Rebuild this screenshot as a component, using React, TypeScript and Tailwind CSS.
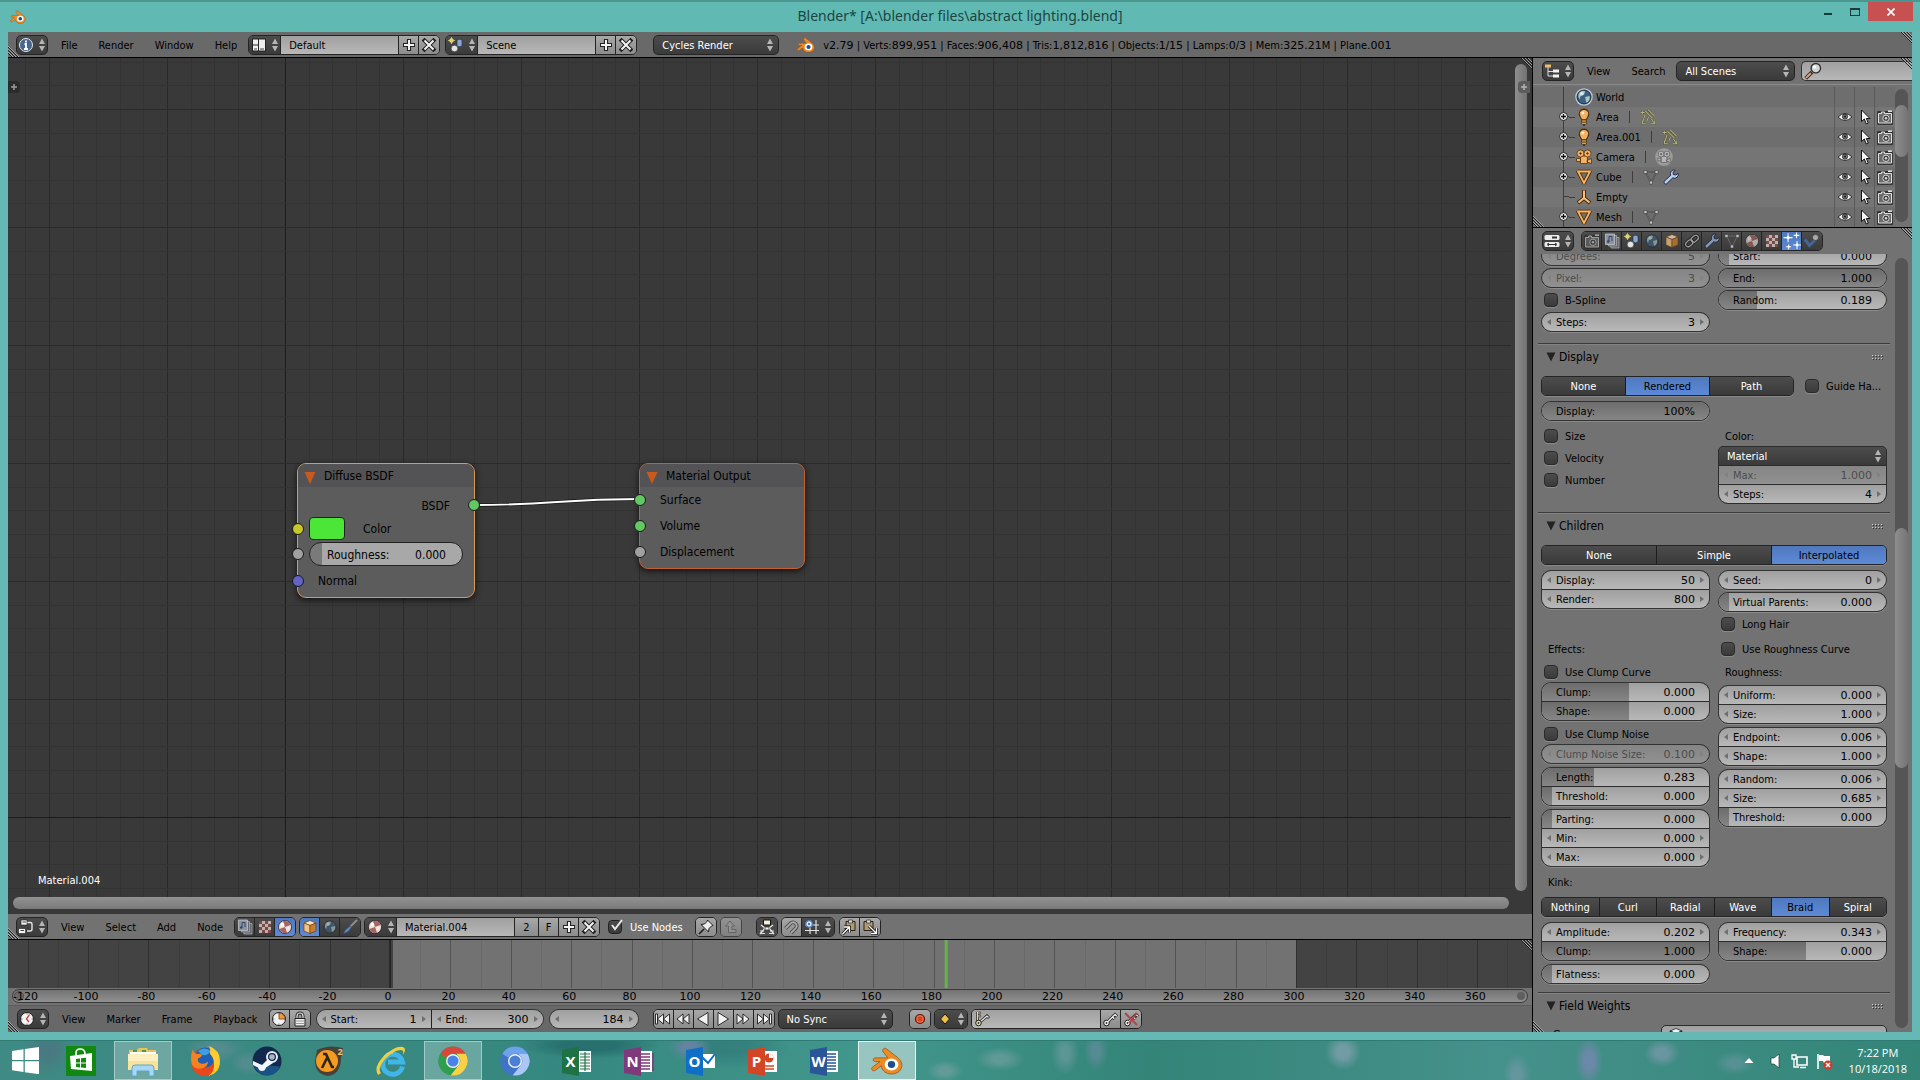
import type { ReactNode } from 'react'

/* ---------- small shared pieces ---------- */

const valueFont = "font-['DejaVu_Sans',sans-serif]"

// Diagonal drag handle in the corner of an editor
const Grip = ({ at }: { at: 'tr' | 'bl' }) => (
    <svg
        className={`pointer-events-none absolute z-10 size-3 ${at === 'tr' ? 'top-0 right-0' : 'bottom-0 left-0'}`}
        viewBox="0 0 12 12"
        aria-hidden="true"
    >
        {at === 'tr' ? (
            <>
                <path d="M1 0 12 11M4 0 12 8M7 0 12 5" stroke="#1f1f1f" />
                <path d="M2 0 12 10M5 0 12 7M8 0 12 4" stroke="#b9b9b9" strokeWidth="0.8" />
            </>
        ) : (
            <>
                <path d="M0 2 10 12M0 5 7 12M0 8 4 12" stroke="#1f1f1f" />
                <path d="M0 1 11 12M0 4 8 12M0 7 5 12" stroke="#b9b9b9" strokeWidth="0.8" />
            </>
        )}
    </svg>
)

const UpDown = () => (
    <svg className="pointer-events-none h-3.5 w-2 shrink-0" viewBox="0 0 8 14" aria-hidden="true">
        <path d="M4 0.500 7 6H1zM4 13.500 1 8h6z" fill="#b5b5b5" />
    </svg>
)

const Tri = ({ dir }: { dir: 'l' | 'r' }) => (
    <svg className="h-2 w-1.5 shrink-0" viewBox="0 0 6 8" aria-hidden="true">
        <path d={dir === 'l' ? 'M5 1v6L1 4z' : 'M1 1v6l4-3z'} fill="#6f6f6f" />
    </svg>
)

const dark = 'bg-linear-to-b from-[#4c4c4c] to-[#3a3a3a]'
const light = 'bg-linear-to-b from-[#a0a0a0] to-[#b8b8b8]'
const tool = 'bg-linear-to-b from-[#a8a8a8] to-[#8c8c8c]'
const blue = 'bg-linear-to-b from-[#4f78bd] to-[#5d8ad8]'

const Cluster = ({ children, className = '' }: { children: ReactNode; className?: string }) => (
    <div className={`flex h-5 shrink-0 overflow-hidden rounded-[5px] border border-[#242424] divide-x divide-[#242424] ${className}`}>
        {children}
    </div>
)

const IconBtn = ({ label, tone = tool, wide, children }: { label: string; tone?: string; wide?: boolean; children: ReactNode }) => (
    <button aria-label={label} className={`flex h-full items-center justify-center gap-1 ${wide ? 'w-8' : 'w-5'} ${tone}`}>
        {children}
    </button>
)

const EditorType = ({ label, children }: { label: string; children: ReactNode }) => (
    <button aria-label={label} className={`flex h-5 w-8 shrink-0 items-center justify-center gap-1 rounded-[5px] border border-[#242424] ${dark}`}>
        {children}
        <UpDown />
    </button>
)

const Menus = ({ items }: { items: string[] }) => (
    <nav className="flex h-5 items-center gap-[21px] pt-0.5 pr-[11px] pl-[13px]">
        {items.map((m) => (
            <button key={m} className="text-black">{m}</button>
        ))}
    </nav>
)

const Header = ({ children, className = '' }: { children: ReactNode; className?: string }) => (
    <div className={`relative flex h-[26px] shrink-0 items-start pt-[3px] ${className}`}>{children}</div>
)

const Drop = ({ label, value, className = '' }: { label: string; value: string; className?: string }) => (
    <div className={`relative flex items-center ${dark} ${className}`}>
        <select aria-label={label} className="h-full w-full appearance-none bg-transparent pt-0.5 pl-2 text-white outline-none">
            <option>{value}</option>
        </select>
        <span className="pointer-events-none absolute right-1 flex"><UpDown /></span>
    </div>
)

/* ---------- icons ---------- */

const I = ({ children, className = 'size-4' }: { children: ReactNode; className?: string }) => (
    <svg className={`shrink-0 ${className}`} viewBox="0 0 16 16" fill="none" aria-hidden="true">{children}</svg>
)

const PlusIcon = () => (
    <I><path d="M8 2v12M2 8h12" stroke="#222" strokeWidth="4.200" /><path d="M8 3v10M3 8h10" stroke="#f4f4f4" strokeWidth="2" /></I>
)
const CrossIcon = () => (
    <I><path d="M3.500 3.500l9 9M12.500 3.500l-9 9" stroke="#222" strokeWidth="4" strokeLinecap="square" /><path d="M3.500 3.500l9 9M12.500 3.500l-9 9" stroke="#f4f4f4" strokeWidth="2" /></I>
)
const InfoIcon = () => (
    <I>
        <circle cx="8" cy="8" r="6.500" fill="#46658f" stroke="#dfe6ee" />
        <path d="M8 3.500v2M6.500 7H8v5M6 12h4" stroke="#fff" strokeWidth="1.800" />
    </I>
)
const ScreenIcon = () => (
    <I>
        <path d="M1 1.500h14v13H1z" fill="#222" />
        <path d="M2 2.500h5v5H2zM2 8.500h5v5H2zM8 2.500h6v11H8z" fill="#efefef" />
        <path d="M3 12h3M9 12h4" stroke="#444" />
    </I>
)
const SceneIcon = () => (
    <I>
        <circle cx="3.500" cy="3.500" r="2.200" fill="#e8dc6a" />
        <path d="M3.500 0v7M0 3.500h7" stroke="#d9cf7d" strokeWidth="0.800" />
        <path d="M9 3q2.500-1.500 5 0v6q-2.500 1.500-5 0z" fill="#89a7d6" stroke="#1e2c45" strokeWidth="0.600" />
        <circle cx="6.500" cy="11.500" r="3.300" fill="#e4e4e4" stroke="#333" strokeWidth="0.600" />
    </I>
)
const TreeIcon = () => (
    <I>
        <path d="M4 3v10h5M4 8.500h5" stroke="#dedede" />
        <path d="M1 1.500h6v3H1z" fill="#f0b869" /><path d="M9 6.500h6v3H9zM9 11.500h6v3H9z" fill="#f2f2f2" />
    </I>
)
const PropsIcon = () => (
    <I>
        <rect x="0.500" y="2" width="15" height="5" rx="1.500" fill="#ececec" /><path d="M8 4.500h5" stroke="#333" strokeWidth="2" />
        <rect x="0.500" y="9" width="15" height="5" rx="1.500" fill="#ececec" /><path d="M4 11.500h8M5 10l-2 1.500L5 13M11 10l2 1.500-2 1.500" stroke="#333" />
    </I>
)
const NodeIcon = () => (
    <I>
        <path d="M9 3.500h3.500q1.500 0 1.500 1.500v5q0 2-2 2H9" stroke="#e5e5e5" strokeWidth="1.400" />
        <path d="M3 1h6v5H3zM0.500 9.500h7v5h-7z" fill="#f3f3f3" stroke="#1c1c1c" strokeWidth="0.600" />
        <path d="M4.500 3H8M2.500 11.500H6" stroke="#444" />
    </I>
)
const ClockIcon = ({ tone = '#c33' }: { tone?: string }) => (
    <I>
        <circle cx="8" cy="8" r="6.500" fill="#f3f3f3" stroke="#222" />
        {tone === 'pie' ? <path d="M8 8V2a6 6 0 0 1 6 6z" fill="#ef9a3b" stroke="#7a3d00" strokeWidth="0.800" /> : <path d="M10.500 3.500 7.500 8l2.500 3" stroke={tone} strokeWidth="1.300" />}
        <path d="M8 2v1.500M8 12.500V14M2 8h1.500M12.500 8H14" stroke="#777" />
    </I>
)
const Ball = ({ dim }: { dim?: boolean }) => (
    <I>
        <g opacity={dim ? 0.65 : 1}>
            <circle cx="8" cy="8" r="6.500" fill="#f1e3e0" stroke="#2b2020" strokeWidth="0.800" />
            <path d="M8 8V2a6 6 0 0 1 6 6zM8 8H2a6 6 0 0 0 6 6z" fill="#a5655e" transform="rotate(-20 8 8)" />
            <circle cx="5.500" cy="5.500" r="1.800" fill="#fff" />
        </g>
    </I>
)
const Checker = ({ dim }: { dim?: boolean }) => (
    <I>
        <g opacity={dim ? 0.75 : 1}>
            <path d="M2 2h12v12H2z" fill="#e6d7d3" />
            <path d="M2 2h3v3H2zM8 2h3v3H8zM5 5h3v3H5zM11 5h3v3h-3zM2 8h3v3H2zM8 8h3v3H8zM5 11h3v3H5zM11 11h3v3h-3z" fill="#8d4e48" />
        </g>
    </I>
)
const LayersIcon = () => (
    <I>
        <g opacity="0.800">
            <path d="M6 4.500h9v10.500H7z" fill="#6a727c" stroke="#c4c4c4" strokeWidth="0.800" />
            <path d="M3.500 2.500h9v10.500h-8z" fill="#6a727c" stroke="#c4c4c4" strokeWidth="0.800" />
            <path d="M1.500 1h9v10.500h-9z" fill="#9ba9bb" stroke="#e4e4e4" strokeWidth="0.800" />
            <path d="M5 8.500V3.500h3v4.500" stroke="#2c4468" /><circle cx="4.200" cy="8.500" r="1.200" fill="#2c4468" />
        </g>
    </I>
)
const CubeIcon = ({ dim }: { dim?: boolean }) => (
    <I>
        <g opacity={dim ? 0.75 : 1} stroke="#5b3208" strokeWidth="0.600">
            <path d="M8 1.500 14 4 8 6.500 2 4z" fill="#fbe0b8" />
            <path d="M2 4l6 2.500v8L2 12z" fill="#f3c186" /><path d="M14 4 8 6.500v8l6-2.500z" fill="#c97f2c" />
        </g>
    </I>
)
const Globe = ({ dim, ring }: { dim?: boolean; ring?: boolean }) => (
    <I className={ring ? 'size-[18px]' : 'size-4'}>
        {ring && <circle cx="8" cy="8" r="7.800" fill="#b9cbdc" />}
        <g opacity={dim ? 0.65 : 1}>
            <circle cx="8" cy="8" r="6.200" fill="#3f5f80" stroke="#12202e" strokeWidth="0.800" />
            <path d="M4 4q3-2.500 5-1l-1 3-3 1-1 3q-2-3 0-6zM9 8l4-1q1 4-3 6z" fill="#a9c9c0" />
            <circle cx="6" cy="5" r="1.600" fill="#fff" opacity="0.600" />
        </g>
    </I>
)
const BrushIcon = () => (
    <I><path d="M15 1 7.500 8.500" stroke="#8f8f8f" strokeWidth="2" /><path d="M8.500 7 9.500 8.500Q7 13.500 1 15 3 9 8.500 7z" fill="#5f88b8" stroke="#24384f" strokeWidth="0.600" /></I>
)
const PinIcon = () => (
    <I>
        <path d="M1 15 6 10" stroke="#1c1c1c" strokeWidth="1.600" />
        <path d="M9.500 1 15 6.500l-1.500.5L11 9.500l-.5 3.500L3 5.500 6.500 5 9 2.500z" fill="#eee" stroke="#1c1c1c" />
    </I>
)
const UpArrowIcon = () => (
    <I><path d="M7 2 2.500 7H5.500v6.500H13v-3H9V7h2.500z" fill="#a6a6a6" stroke="#4c4c4c" strokeWidth="0.800" /></I>
)
const BackdropIcon = () => (
    <I>
        <path d="M2 6 6 9 1 15M14 6l-4 3 5 6" stroke="#efefef" strokeWidth="1.200" />
        <path d="M4.500 1h7v5h-7z" fill="#f5efda" stroke="#111" /><path d="M6 8h4v3H6z" fill="#eee" stroke="#111" strokeWidth="0.600" />
        <path d="M1 12h4M11 12h4M1 14.500h5M10 14.500h5" stroke="#dcdcdc" />
    </I>
)
const MagnetIcon = () => (
    <I>
        <path d="M2.500 9.500 8 4a3.600 3.600 0 0 1 5 5l-5 5" stroke="#444" strokeWidth="3.600" />
        <path d="M2.500 9.500 8 4a3.600 3.600 0 0 1 5 5l-5 5" stroke="#a9a9a9" strokeWidth="1.800" />
    </I>
)
const SnapIcon = () => (
    <I>
        <path d="M6 1v14M12 1v14M1 6h14M1 11.500h14" stroke="#e2e2e2" strokeWidth="1.200" />
        <circle cx="5" cy="5" r="3.300" fill="#dbe6f6" stroke="#4a76b8" strokeWidth="1.300" /><circle cx="5" cy="5" r="1" fill="#26508f" />
    </I>
)
const ClipIcon = ({ out }: { out?: boolean }) => (
    <I>
        <g transform={out ? undefined : 'translate(16 0) scale(-1 1)'}>
            <path d="M2 2.500h9v9H2z" fill="#b09a72" stroke="#2a2213" /><path d="M4.500 1h4v3h-4z" fill="#ddd" stroke="#222" strokeWidth="0.700" />
        </g>
        {out ? <><path d="M7 7l7 7M14.500 9v5.500H9" stroke="#111" strokeWidth="3" /><path d="M7 7l7 7M14.500 9v5.500H9" stroke="#fff" strokeWidth="1.400" /></>
            : <><path d="M1.500 15 8 8.500M3 8h5.500v5.500" stroke="#111" strokeWidth="3" /><path d="M1.500 15 8 8.500M3 8h5.500v5.500" stroke="#fff" strokeWidth="1.400" /></>}
    </I>
)
const LockIcon = () => (
    <I>
        <path d="M5 8V5a3 3 0 0 1 6 0v3" stroke="#222" strokeWidth="3" /><path d="M5 8V5a3 3 0 0 1 6 0v3" stroke="#eee" strokeWidth="1.200" />
        <path d="M3 7.500h10V15H3z" fill="#eee" stroke="#222" /><path d="M4 10h8M4 12.500h8" stroke="#999" />
    </I>
)
const KeyIcon = ({ tone = '#f1f1f1' }: { tone?: string }) => (
    <I>
        <path d="M6 10.500 13 3.500l2 2M10.500 6l2 2" stroke="#1c1c1c" strokeWidth="3" /><circle cx="4.500" cy="12" r="2.800" fill={tone} stroke="#1c1c1c" />
        <path d="M6 10.500 13 3.500l1.800 1.800M10.500 6l1.800 1.800" stroke={tone} strokeWidth="1.400" /><circle cx="4.500" cy="12" r="0.900" fill="#333" />
    </I>
)
const KeysIcon = () => (
    <I>
        <path d="M3.500 1v9M3.500 2h3M3.500 5h3" stroke="#222" strokeWidth="2.600" /><path d="M3.500 1v9M3.500 2h2.500M3.500 5h2.500" stroke="#e3dfa0" strokeWidth="1.200" />
        <path d="M6 11 13 5l2 2" stroke="#222" strokeWidth="2.800" /><path d="M6 11 13 5l1.500 1.500" stroke="#eee" strokeWidth="1.200" />
        <circle cx="4.500" cy="12" r="2.800" fill="#e3dfa0" stroke="#222" /><circle cx="4.500" cy="12" r="0.900" fill="#333" />
    </I>
)
const Lamp = () => (
    <I className="size-[18px]">
        <path d="M8 1a4.300 4.300 0 0 0-3.300 7L6 10.500h4L11.300 8A4.300 4.300 0 0 0 8 1z" fill="#f0b264" stroke="#4d2a05" strokeWidth="0.900" />
        <path d="M5.500 11.500h5M5.500 13.500h5M7 15h2" stroke="#5a3408" strokeWidth="1.800" /><path d="M6.200 11.500h3.600M6.200 13.500h3.600" stroke="#efc27e" strokeWidth="0.900" /><circle cx="7" cy="4.500" r="1.300" fill="#fff0cf" />
    </I>
)
const CamBody = ({ fill, edge }: { fill: string; edge: string }) => (
    <g fill={fill} stroke={edge} strokeWidth="0.700">
        <path d="M4.500 7h7v7.500h-7zM11 11.500l4.500-2v5l-4.500-1.500zM0.500 9.500h4v3h-4z" /><circle cx="4.500" cy="4.500" r="3.500" /><circle cx="11.500" cy="4.500" r="3.500" />
        <g fill={edge}><circle cx="4.500" cy="4.500" r="0.800" /><circle cx="11.500" cy="4.500" r="0.800" /></g>
    </g>
)
const MeshTri = () => (
    <I><path d="M2 2.500h12L8 14z" stroke="#4d2a05" strokeWidth="3.600" strokeLinejoin="round" /><path d="M2 2.500h12L8 14z" stroke="#f5b566" strokeWidth="1.800" /></I>
)
const MeshData = () => (
    <I>
        <path d="M2.500 3h11L8 13.500z" stroke="#3c3c3c" strokeWidth="1.600" /><path d="M2.500 3h11L8 13.500z" stroke="#909090" strokeWidth="0.600" />
        <path d="M1 1.500h3v3H1zM12 1.500h3v3h-3zM6.500 12h3v3h-3z" fill="#c4c4c4" stroke="#3d3d3d" strokeWidth="0.600" />
    </I>
)
const EmptyIcon = () => (
    <I><path d="M8 1v8L2 14M8 9l6 5" stroke="#4d2a05" strokeWidth="4" /><path d="M8 1.500V9L2.500 13.500M8 9l5.500 4.500" stroke="#f5c07a" strokeWidth="2" /></I>
)
const LampData = () => (
    <I className="size-[18px]">
        <path d="M5.500 2.500 12 9M8 1.500l6 6M3 2.500v3M1.500 4H5M5.500 6 3 13M3 11v3h3M8.500 8 7 11.500M11 9.500l2.500 4M10.500 14H14v-3" stroke="#54533a" strokeWidth="1.800" />
        <path d="M5.500 2.500 12 9M8 1.500l6 6M3 2.500v3M1.500 4H5M5.500 6 3 13M3 11v3h3M8.500 8 7 11.500M11 9.500l2.500 4M10.500 14H14v-3" stroke="#b5b178" strokeWidth="0.900" />
    </I>
)
const Wrench = ({ dim }: { dim?: boolean }) => (
    <I>
        <path d="M10.500 1a3.800 3.800 0 0 0-2.800 5.300L1 12.500q-.5 2.500 2 2.800l6.800-6.500a3.800 3.800 0 0 0 5.400-4.500L12.800 6 10.300 5.500 10 3.300l2.300-2z" fill={dim ? '#8596b4' : '#b8cdf2'} stroke="#1b2740" strokeWidth="0.900" />
    </I>
)
const Eye = () => (
    <I><path d="M1 8q7-7 14 0-7 7-14 0z" fill="#f1f1f1" stroke="#222" strokeWidth="0.900" /><circle cx="8" cy="7.600" r="2.600" fill="#777" stroke="#111" strokeWidth="0.700" /><circle cx="8" cy="7.600" r="1" fill="#111" /></I>
)
const Cursor = () => (
    <I><path d="M4.500 1v11.500l2.800-2.500 2 5 2-1-2-4.500h3.700z" fill="#f5f5f5" stroke="#111" /></I>
)
const CamIcon = ({ dim }: { dim?: boolean }) => (
    <I>
        <g opacity={dim ? 0.6 : 1}>
            <path d="M1 3h14v12H1z" stroke="#222" strokeWidth="1.400" />
            <path d="M1.500 4.500h3V3h3v1.500h7v9.500h-13z" fill="#6c6c6c" stroke="#e0e0e0" /><path d="M11 2.200h4" stroke="#e0e0e0" strokeWidth="1.600" />
            <circle cx="9" cy="9.300" r="3.200" fill="#3d3d3d" stroke="#d8d8d8" /><circle cx="9" cy="9.300" r="1.200" fill="#ddd" />
        </g>
    </I>
)
const ChainIcon = () => (
    <I>
        <g transform="rotate(-40 8 8)" stroke="#1d1d1d" strokeWidth="3"><rect x="0.500" y="5.500" width="8" height="5" rx="2.500" /><rect x="7.500" y="5.500" width="8" height="5" rx="2.500" /></g>
        <g transform="rotate(-40 8 8)" stroke="#9c9c9c" strokeWidth="1.300"><rect x="0.500" y="5.500" width="8" height="5" rx="2.500" /><rect x="7.500" y="5.500" width="8" height="5" rx="2.500" /></g>
    </I>
)
const StarsIcon = () => (
    <I className="size-[18px]"><path d="M4.500 1v8M.5 5h8M12 .5v5M9.500 3h5M12.500 8v7M9 11.500h7M5 11v4.500M2.800 13.200h4.400" stroke="#fffce0" strokeWidth="0.900" /><circle cx="4.500" cy="5" r="1.400" fill="#fff" /><circle cx="12" cy="3" r="0.900" fill="#fff" /><circle cx="12.500" cy="11.500" r="1.300" fill="#fff" /><circle cx="5" cy="13.200" r="0.900" fill="#fff" /></I>
)
const PhysicsIcon = () => (
    <I><path d="M1 6.500 5.500 12.500 11 7" stroke="#41669b" strokeWidth="3" /><circle cx="11.500" cy="4.500" r="3" fill="#a9a9a9" stroke="#333" strokeWidth="0.600" /></I>
)
const SearchIcon = () => (
    <I className="size-[18px]">
        <path d="M1.500 14.500 7 9" stroke="#4a2f1e" strokeWidth="3.400" /><path d="M1.800 14.200 6 10" stroke="#d8a78b" strokeWidth="1.600" />
        <circle cx="10.500" cy="5.500" r="4.200" fill="#d5d5d5" stroke="#333" strokeWidth="1.200" /><circle cx="9.500" cy="4.500" r="1.500" fill="#fff" />
    </I>
)
const BlenderLogo = ({ className }: { className: string }) => (
    <svg className={`shrink-0 ${className}`} viewBox="0 0 32 28" aria-hidden="true">
        <path d="M12.500 1.800c1-.8 2.200-.6 3 .1l11 8.500c3.500 2.900 4.800 6 4.200 9.300-1 4.800-5.400 7.300-10.200 7.300-5.400 0-9.800-3.200-10.200-8.200l-6 4.500c-1.200.8-2.600.5-3.300-.4-.7-1-.4-2 .5-2.700l7.400-5.600H4.200c-1.300 0-2-.8-2-1.800s.8-1.900 2-1.900h12.600L12.300 5c-1-.8-.8-2.300.2-3.200z" fill="#ec8a24" stroke="#8f4a0b" strokeWidth="0.700" />
        <ellipse cx="20.500" cy="17.500" rx="6.800" ry="6" fill="#fff" />
        <ellipse cx="20.500" cy="17.500" rx="3.700" ry="3.400" fill="#1f4f88" />
    </svg>
)
const Play = ({ kind }: { kind: 'first' | 'prevk' | 'back' | 'play' | 'nextk' | 'last' }) => {
    const flip = kind === 'play' || kind === 'nextk' || kind === 'last'
    return (
        <I>
            <g transform={flip ? 'translate(16 0) scale(-1 1)' : undefined} fill="#f2f2f2" stroke="#1c1c1c" strokeWidth="0.900">
                {(kind === 'back' || kind === 'play') && <path d="M13 1.500v13L2.500 8z" />}
                {(kind === 'prevk' || kind === 'nextk') && <path d="M8 3v10L2 8zM14 3v10L8 8z" />}
                {(kind === 'first' || kind === 'last') && <path d="M.5 3h2v10h-2zM8.500 3v10L2.500 8zM14.500 3v10L8.500 8z" />}
            </g>
        </I>
    )
}

/* ---------- number fields and sliders ---------- */

type FieldData = { label: string; value: string; fill?: number; off?: boolean }

// fill is the dark part of a slider in percent, fields without it get arrows
const Field = ({ label, value, fill, off }: FieldData) => (
    <label className={`relative flex h-[18px] items-center px-1 ${off ? 'bg-linear-to-b from-[#858585] to-[#919191] text-[#4c4c4c]' : `${light} text-black`}`}>
        {fill !== undefined && (
            <span className="absolute inset-y-0 left-0 bg-linear-to-b from-[#6c6c6c] to-[#868686]" style={{ width: `${fill}%` }} />
        )}
        {fill === undefined ? <span className={off ? 'opacity-30' : ''}><Tri dir="l" /></span> : <span className="w-1.5" />}
        <span className="relative ml-1 pt-0.5 whitespace-nowrap">{label}</span>
        <input
            className={`relative mr-1 w-0 min-w-0 flex-1 bg-transparent pt-0.5 text-right outline-none ${valueFont}`}
            defaultValue={value}
            disabled={off}
        />
        {fill === undefined ? <span className={off ? 'opacity-30' : ''}><Tri dir="r" /></span> : <span className="w-1.5" />}
    </label>
)

const Fields = ({ rows }: { rows: FieldData[] }) => (
    <div className="flex flex-col gap-px overflow-hidden rounded-[10px] border border-[#333] bg-[#2c2c2c] shadow-[0_1px_0_#8a8a8a]">
        {rows.map((r, i) => <Field key={i} {...r} />)}
    </div>
)

const Check = ({ label, className = '' }: { label: string; className?: string }) => (
    <label className={`flex h-5 items-center gap-[7px] pl-[3px] whitespace-nowrap text-black ${className}`}>
        <input type="checkbox" className={`size-3.5 shrink-0 appearance-none rounded-[4px] border border-[#2a2a2a] shadow-[0_1px_0_#8a8a8a] ${dark}`} />
        <span className="pt-0.5">{label}</span>
    </label>
)

const Caption = ({ children }: { children: ReactNode }) => (
    <p className="flex h-5 items-center pt-0.5 pl-[7px] text-black">{children}</p>
)

const Tabs = ({ items, active, className = '' }: { items: string[]; active: string; className?: string }) => (
    <div className={`flex h-5 divide-x divide-[#1d1d1d] overflow-hidden rounded-[5px] border border-[#242424] shadow-[0_1px_0_#8a8a8a] ${className}`}>
        {items.map((t) => (
            <button key={t} className={`flex-1 basis-0 pt-0.5 ${t === active ? `${blue} text-black` : `${dark} text-white`}`}>{t}</button>
        ))}
    </div>
)

const Panel = ({ title, children }: { title: string; children: ReactNode }) => (
    <section className="border-t border-[#3c3c3c] shadow-[inset_0_1px_0_#838383]">
        <div className="flex h-[26px] items-center justify-between pr-1.5 pl-2">
            <h2>
                <button className="flex items-center gap-[3px] text-[12px] text-black">
                    <svg className="size-2.5" viewBox="0 0 10 10" aria-hidden="true"><path d="M.5.5h9L5 9.500z" fill="#222" /></svg>
                    {title}
                </button>
            </h2>
            <svg className="h-1.5 w-3" viewBox="0 0 12 6" aria-hidden="true">
                <path d="M0 1.500h12M0 4.500h12" stroke="#d0d0d0" strokeDasharray="1 2" /><path d="M1 2.500h11M1 5.500h11" stroke="#333" strokeDasharray="1 2" />
            </svg>
        </div>
        <div className="flex flex-col gap-[5px] px-[3px] pt-1.5 pb-2">{children}</div>
    </section>
)

const Cols = ({ left, right, gap = 'gap-0.5' }: { left: ReactNode; right: ReactNode; gap?: string }) => (
    <div className="grid grid-cols-2 gap-x-2">
        <div className={`flex flex-col ${gap}`}>{left}</div>
        <div className={`flex flex-col ${gap}`}>{right}</div>
    </div>
)

/* ---------- node editor ---------- */

// a line every 23.6px, every fifth is stronger and the one at the origin is strongest
const gridLines = (origin: number, before: number, after: number) =>
    Array.from({ length: before + after }, (_, k) => k - before).map((i) => ({
        at: Math.round(origin + (i * 118) / 5) + 0.5,
        color: i === 0 ? '#1c1c1c' : i % 5 === 0 ? '#2a2a2a' : '#333333',
    }))

const Socket = ({ color, side = 'left' }: { color: string; side?: 'left' | 'right' }) => (
    <span className={`absolute top-1/2 size-3 -translate-y-1/2 rounded-full border border-[#1b1b1b] ${side === 'left' ? '-left-[6px]' : '-right-[6px]'} ${color}`} />
)

const Node = ({ title, className, children }: { title: string; className: string; children: ReactNode }) => (
    <div className={`absolute rounded-[9px] border bg-[#5c5c5c] text-[12px] text-black shadow-[0_2px_6px_#111] ${className}`}>
        <div className="flex h-[23px] items-center gap-2 rounded-t-[8px] bg-[#535355] pl-1.5">
            <svg className="mt-1 h-3 w-3" viewBox="0 0 12 12" aria-hidden="true"><path d="M.5 0h11L6 12z" fill="#c95a1e" /></svg>
            {title}
        </div>
        {children}
    </div>
)

const NodeEditor = () => (
    <div className="flex min-h-0 flex-1 flex-col bg-[#393939]">
        <div className="relative flex min-h-0 flex-1">
            <div className="relative flex-1 overflow-hidden">
                <svg className="absolute inset-0 h-full w-full" aria-hidden="true">
                    {gridLines(277, 12, 150).map((l, i) => <path key={i} d={`M${l.at} 0V3000`} stroke={l.color} />)}
                    {gridLines(759, 33, 80).map((l, i) => <path key={i} d={`M0 ${l.at}H5000`} stroke={l.color} />)}
                    <path d="M467 447C549 447 549 441 631 441" stroke="#1a1a1a" strokeWidth="3.500" fill="none" />
                    <path d="M467 447C549 447 549 441 631 441" stroke="#fff" strokeWidth="1.800" fill="none" />
                </svg>
                <button aria-label="Tools" className="absolute top-[23px] left-0 flex size-3 items-center justify-center rounded-r-sm bg-[#2b2b2b]">
                    <svg className="size-2" viewBox="0 0 8 8"><path d="M4 1v6M1 4h6" stroke="#999" strokeWidth="1.500" /></svg>
                </button>
                <Node title="Diffuse BSDF" className="top-[405px] left-[289px] w-[178px] border-[#d99a55] pb-[3px]">
                    <div className="mt-1.5 flex flex-col">
                        <div className="relative flex h-6 items-center justify-end pt-px pr-6">BSDF<Socket side="right" color="bg-[#63c763]" /></div>
                        <div className="relative flex h-[23px] items-center gap-[18px] pl-[11px]">
                            <Socket color="bg-[#c7c729]" />
                            <button aria-label="Color" className="h-[23px] w-9 rounded-[4px] border border-[#222] bg-[#4be637]" />
                            Color
                        </div>
                        <div className="relative flex h-7 items-center px-[11px]">
                            <Socket color="bg-[#a1a1a1]" />
                            <label className="flex h-6 w-full items-center overflow-hidden rounded-full border border-[#222] bg-linear-to-r from-[#7a7a7a] from-8% to-[#a8a8a8] to-8% pt-px">
                                <span className="ml-[17px]">Roughness:</span>
                                <input className="mr-4 w-0 flex-1 bg-transparent text-right outline-none" defaultValue="0.000" />
                            </label>
                        </div>
                        <div className="relative flex h-[26px] items-center pl-5"><Socket color="bg-[#6363c7]" />Normal</div>
                    </div>
                </Node>
                <Node title="Material Output" className="top-[405px] left-[631px] w-[166px] border-[#c4602f] pb-[3px]">
                    <div className="relative flex h-[26px] items-center pl-5"><Socket color="bg-[#63c763]" />Surface</div>
                    <div className="relative flex h-[26px] items-center pl-5"><Socket color="bg-[#63c763]" />Volume</div>
                    <div className="relative flex h-[26px] items-center pl-5"><Socket color="bg-[#a1a1a1]" />Displacement</div>
                </Node>
                <p className="absolute bottom-2 left-[30px] text-white">Material.004</p>
            </div>
            <div className="flex w-[21px] py-1.5 pl-1">
                <div className="w-3 rounded-full bg-linear-to-r from-[#8e8e8e] to-[#727272]" />
            </div>
            <button aria-label="Properties" className="absolute top-[23px] right-0.5 flex size-3 items-center justify-center rounded-l-sm bg-[#5c5c5c]">
                <svg className="size-2" viewBox="0 0 8 8"><path d="M4 1v6M1 4h6" stroke="#b5b5b5" strokeWidth="1.500" /></svg>
            </button>
            <Grip at="tr" />
        </div>
        <div className="h-[17px] pr-[23px] pl-[5px]">
            <div className="h-3 rounded-full bg-linear-to-b from-[#929292] to-[#7a7a7a]" />
        </div>
    </div>
)

const NodeHeader = () => (
    <Header className="border-b border-black bg-[#727272] pl-2">
        <EditorType label="Editor type"><NodeIcon /></EditorType>
        <Menus items={['View', 'Select', 'Add', 'Node']} />
        <Cluster>
            <IconBtn label="Compositing" tone={dark}><LayersIcon /></IconBtn>
            <IconBtn label="Texture" tone={dark}><Checker dim /></IconBtn>
            <IconBtn label="Shader" tone={blue}><Ball /></IconBtn>
        </Cluster>
        <Cluster className="ml-[3px]">
            <IconBtn label="Object" tone={blue}><CubeIcon /></IconBtn>
            <IconBtn label="World" tone={dark}><Globe dim /></IconBtn>
            <IconBtn label="Line style" tone={dark}><BrushIcon /></IconBtn>
        </Cluster>
        <Cluster className="ml-[3px]">
            <IconBtn label="Browse material" tone={dark} wide><Ball /><UpDown /></IconBtn>
            <input aria-label="Material name" className={`w-[118px] pt-0.5 pl-2 text-black outline-none ${light}`} defaultValue="Material.004" />
            <button className={`w-6 pt-0.5 text-black ${tool}`}>2</button>
            <button className={`w-5 pt-0.5 text-black ${tool}`}>F</button>
            <IconBtn label="Add material"><PlusIcon /></IconBtn>
            <IconBtn label="Unlink material"><CrossIcon /></IconBtn>
        </Cluster>
        <label className="ml-2 flex h-5 items-center gap-2 text-white">
            <span className="relative flex">
                <input type="checkbox" defaultChecked className={`size-3.5 appearance-none rounded-[4px] border border-[#222] ${dark}`} />
                <svg className="pointer-events-none absolute -top-0.5 left-0.5 size-3.5" viewBox="0 0 14 14" aria-hidden="true"><path d="M2 7l3 4 7-9" stroke="#e8e8e8" strokeWidth="2" fill="none" /></svg>
            </span>
            <span className="pt-0.5">Use Nodes</span>
        </label>
        <Cluster className="ml-3"><IconBtn label="Pin"><PinIcon /></IconBtn></Cluster>
        <Cluster className="ml-[3px] opacity-60"><IconBtn label="Go to parent"><UpArrowIcon /></IconBtn></Cluster>
        <Cluster className="ml-3.5"><IconBtn label="Auto offset" tone="bg-[#4a4a4a]"><BackdropIcon /></IconBtn></Cluster>
        <Cluster className="ml-[3px]">
            <IconBtn label="Snap"><MagnetIcon /></IconBtn>
            <IconBtn label="Snap element" tone={dark} wide><SnapIcon /><UpDown /></IconBtn>
        </Cluster>
        <Cluster className="ml-1">
            <IconBtn label="Copy nodes"><ClipIcon /></IconBtn>
            <IconBtn label="Paste nodes"><ClipIcon out /></IconBtn>
        </Cluster>
        <Grip at="bl" />
    </Header>
)

/* ---------- timeline ---------- */

const frameX = (f: number) => 382 + f * 3.02

const Timeline = () => {
    const tens = Array.from({ length: 51 }, (_, i) => -120 + i * 10)
    return (
        <div className="relative h-[66px] shrink-0 overflow-hidden bg-[#727272]">
            <svg className="absolute inset-0 h-full w-full" aria-hidden="true">
                <rect width="100%" height="48" fill="#434343" />
                <rect x={frameX(1)} width={frameX(300) - frameX(1)} height="48" fill="#727272" />
                {tens.map((f) => (
                    <path key={f} d={`M${Math.round(frameX(f)) + 0.5} 0V48`} stroke="#000" strokeOpacity={f % 20 === 0 ? 0.28 : 0.08} />
                ))}
                <path d={`M${frameX(0)} 0V48`} stroke="#222" strokeWidth="1.500" />
                <rect x={frameX(184) - 1} width="3" height="48" fill="#65b54a" />
            </svg>
            <div className="absolute inset-x-1 top-[49px] h-3.5 rounded-full border border-[#3a3a3a] bg-linear-to-b from-[#737373] to-[#909090]" />
            <svg className={`absolute inset-x-0 top-[49px] h-3.5 w-full text-[11px] ${valueFont}`}>
                <circle cx="11" cy="7" r="4.500" fill="#6a6a6a" stroke="#4b4b4b" />
                {tens.filter((f) => f % 20 === 0 && f <= 360).map((f) => (
                    <text key={f} x={frameX(f) - 2} y="11" textAnchor="middle" fill="#000">{f}</text>
                ))}
            </svg>
            <span className="absolute top-[52px] right-[7px] size-2 rounded-full bg-[#5f5f5f]" />
            <Grip at="tr" />
        </div>
    )
}

const TimelineHeader = () => (
    <Header className="bg-[#686868] pl-[9px] shadow-[0_-1px_0_#5c5c5c]">
        <EditorType label="Editor type"><ClockIcon /></EditorType>
        <Menus items={['View', 'Marker', 'Frame', 'Playback']} />
        <Cluster>
            <IconBtn label="Preview range"><ClockIcon tone="pie" /></IconBtn>
            <IconBtn label="Lock time"><LockIcon /></IconBtn>
        </Cluster>
        <div className="ml-[5px] flex divide-x divide-[#222] overflow-hidden rounded-full border border-[#333]">
            <div className="w-[115px]"><Field label="Start:" value="1" /></div>
            <div className="w-[111px]"><Field label="End:" value="300" /></div>
        </div>
        <div className="ml-[5px] w-[90px] overflow-hidden rounded-full border border-[#333]"><Field label="" value="184" /></div>
        <Cluster className="ml-3.5">
            <IconBtn label="Jump to start"><Play kind="first" /></IconBtn>
            <IconBtn label="Previous keyframe"><Play kind="prevk" /></IconBtn>
            <IconBtn label="Play backwards"><Play kind="back" /></IconBtn>
            <IconBtn label="Play"><Play kind="play" /></IconBtn>
            <IconBtn label="Next keyframe"><Play kind="nextk" /></IconBtn>
            <IconBtn label="Jump to end"><Play kind="last" /></IconBtn>
        </Cluster>
        <Drop label="Sync mode" value="No Sync" className="ml-[3px] h-5 w-[115px] rounded-[5px] border border-[#242424]" />
        <Cluster className="ml-4">
            <IconBtn label="Record"><I><circle cx="8" cy="8" r="4.500" fill="#d8421c" stroke="#5c1604" strokeWidth="1.200" /><circle cx="8" cy="8" r="3.300" stroke="#f19a7c" strokeWidth="0.700" /></I></IconBtn>
        </Cluster>
        <Cluster className="ml-[3px]">
            <IconBtn label="Keyframe type" tone={dark} wide><I><path d="M8 3l4.500 5L8 13 3.500 8z" fill="#f2c04c" stroke="#221a08" /></I><UpDown /></IconBtn>
        </Cluster>
        <Cluster className="ml-[3px]">
            <div className={`flex w-[129px] items-center pl-0.5 ${light}`}>
                <KeysIcon />
                <input aria-label="Keying set" className="w-0 flex-1 bg-transparent outline-none" />
            </div>
            <IconBtn label="Insert keyframe"><KeyIcon /></IconBtn>
            <button aria-label="Delete keyframe" className={`relative flex w-5 items-center justify-center ${tool}`}>
                <KeyIcon />
                <svg className="absolute size-4" viewBox="0 0 16 16"><path d="M2 2l12 12M14 2 6 12" stroke="#b5444a" strokeWidth="2" /></svg>
            </button>
        </Cluster>
        <Grip at="bl" />
    </Header>
)

/* ---------- outliner ---------- */

const outline: { name: string; icon: ReactNode; open?: boolean; data?: ReactNode[]; toggles?: boolean }[] = [
    { name: 'World', icon: <Globe ring /> },
    { name: 'Area', icon: <Lamp />, open: true, toggles: true, data: [<LampData />] },
    { name: 'Area.001', icon: <Lamp />, open: true, toggles: true, data: [<LampData />] },
    {
        name: 'Camera', icon: <I><CamBody fill="#f3b267" edge="#4d2a05" /></I>, open: true, toggles: true,
        data: [<I className="size-[18px]"><circle cx="8" cy="8" r="7.800" fill="#9c9c9c" /><g transform="translate(2 2) scale(.75)"><CamBody fill="#b5b5b5" edge="#505050" /></g></I>],
    },
    { name: 'Cube', icon: <MeshTri />, open: true, toggles: true, data: [<MeshData />, <Wrench />] },
    { name: 'Empty', icon: <EmptyIcon />, toggles: true },
    { name: 'Mesh', icon: <MeshTri />, open: true, toggles: true, data: [<MeshData />] },
]

const toggles = [
    { label: 'Visible', icon: <Eye /> },
    { label: 'Selectable', icon: <Cursor /> },
    { label: 'Renderable', icon: <CamIcon /> },
]

const Outliner = () => (
    <>
        <Header className="bg-[#727272] pl-[9px]">
            <EditorType label="Editor type"><TreeIcon /></EditorType>
            <Menus items={['View', 'Search']} />
            <Drop label="Display mode" value="All Scenes" className="h-5 w-[119px] rounded-[5px] border border-[#242424]" />
            <div className={`ml-1.5 flex h-5 flex-1 items-center rounded-l-[5px] border border-r-0 border-[#333] pl-0.5 ${light}`}>
                <SearchIcon />
                <input aria-label="Search" className="w-0 flex-1 bg-transparent outline-none" />
            </div>
            <Grip at="tr" />
        </Header>
        <div className="relative flex h-[144px] shrink-0 overflow-hidden border-b border-black bg-[#727272] pt-[3px] shadow-[inset_0_1px_0_#8a8a8a]">
            <ul className="min-w-0 flex-1">
                {outline.map((o) => (
                    <li key={o.name} className="flex h-5 items-center text-black odd:bg-[#6e6e6e] even:bg-[#757575]">
                        <span className="ml-[25px] flex size-[11px] shrink-0 items-center justify-center">
                            <svg className="h-5 w-[11px] shrink-0" viewBox="0 0 11 20" aria-hidden="true">
                                <path d="M5.500 0V20" stroke="#3d3d3d" />
                                {o.name !== 'World' && <path d="M5.500 9.500H11" stroke="#3d3d3d" />}
                                {o.open && <><circle cx="5.500" cy="9.500" r="4" fill="#eee" stroke="#222" /><path d="M5.500 7v5M3 9.500h5" stroke="#111" strokeWidth="1.300" /></>}
                            </svg>
                        </span>
                        <span className={`h-px w-1.5 shrink-0 ${o.name === 'World' ? '' : 'bg-[#3d3d3d]'}`} />
                        <span className="flex w-[18px] shrink-0 justify-center">{o.icon}</span>
                        <span className="ml-[3px] pt-0.5">{o.name}</span>
                        {o.data && <span className="mr-2 ml-2.5 h-3 w-px bg-[#3c3c3c]" />}
                        {o.data?.map((d, i) => <span key={i} className="flex w-5 justify-center">{d}</span>)}
                        <span className="ml-auto flex h-5 divide-x divide-[#5a5a5a] border-l border-[#5a5a5a]">
                            {toggles.map((t) => (
                                <button key={t.label} aria-label={t.label} className="flex w-5 items-center justify-center">{o.toggles && t.icon}</button>
                            ))}
                        </span>
                    </li>
                ))}
            </ul>
            <div className="mt-0.5 mr-1 mb-[5px] w-[13px] rounded-full bg-[#555] pt-4">
                <div className="h-[52px] rounded-full bg-linear-to-r from-[#8e8e8e] to-[#747474]" />
            </div>
            <Grip at="bl" />
        </div>
    </>
)

/* ---------- properties ---------- */

const propTabs: { label: string; icon: ReactNode }[] = [
    { label: 'Render', icon: <CamIcon dim /> },
    { label: 'Render Layers', icon: <LayersIcon /> },
    { label: 'Scene', icon: <SceneIcon /> },
    { label: 'World', icon: <Globe dim /> },
    { label: 'Object', icon: <CubeIcon dim /> },
    { label: 'Constraints', icon: <ChainIcon /> },
    { label: 'Modifiers', icon: <Wrench dim /> },
    { label: 'Data', icon: <MeshData /> },
    { label: 'Material', icon: <Ball dim /> },
    { label: 'Texture', icon: <Checker dim /> },
    { label: 'Particles', icon: <StarsIcon /> },
    { label: 'Physics', icon: <PhysicsIcon /> },
]

const Properties = () => (
    <>
        <Header className="bg-[#727272] pl-[9px] shadow-[0_1px_0_#8a8a8a]">
            <EditorType label="Editor type"><PropsIcon /></EditorType>
            <Cluster className="ml-[7px]">
                {propTabs.map((t) => (
                    <IconBtn key={t.label} label={t.label} tone={t.label === 'Particles' ? blue : dark}>{t.icon}</IconBtn>
                ))}
            </Cluster>
            <Grip at="tr" />
        </Header>
        <div className="relative flex min-h-0 flex-1 overflow-hidden bg-[#727272] pl-[5px]">
            {/* scrolled a little way down, so the first rows are cut */}
            <div className="-mt-2 h-0 min-w-0 flex-1">
                <div className="px-[3px] pb-[11px]">
                    <Cols
                        left={<>
                            <Fields rows={[{ label: 'Degrees:', value: '5', off: true }]} />
                            <Fields rows={[{ label: 'Pixel:', value: '3', off: true }]} />
                            <Check label="B-Spline" />
                            <Fields rows={[{ label: 'Steps:', value: '3' }]} />
                        </>}
                        right={<>
                            <Fields rows={[{ label: 'Start:', value: '0.000', fill: 6 }]} />
                            <Fields rows={[{ label: 'End:', value: '1.000', fill: 100 }]} />
                            <Fields rows={[{ label: 'Random:', value: '0.189', fill: 23 }]} />
                        </>}
                    />
                </div>
                <Panel title="Display">
                    <div className="flex">
                        <Tabs items={['None', 'Rendered', 'Path']} active="Rendered" className="w-[253px]" />
                        <Check label="Guide Ha..." className="ml-2" />
                    </div>
                    <Cols left={<Fields rows={[{ label: 'Display:', value: '100%', fill: 100 }]} />} right={null} />
                    <Cols
                        left={<><Check label="Size" /><Check label="Velocity" /><Check label="Number" /></>}
                        right={
                            <div>
                                <Caption>Color:</Caption>
                                <div className="flex flex-col gap-px overflow-hidden rounded-t-[5px] rounded-b-[10px] border border-[#2c2c2c] bg-[#2c2c2c]">
                                    <Drop label="Color" value="Material" className="h-[18px]" />
                                    <Field label="Max:" value="1.000" off />
                                    <Field label="Steps:" value="4" />
                                </div>
                            </div>
                        }
                    />
                </Panel>
                <Panel title="Children">
                    <Tabs items={['None', 'Simple', 'Interpolated']} active="Interpolated" />
                    <Cols
                        left={<Fields rows={[{ label: 'Display:', value: '50' }, { label: 'Render:', value: '800' }]} />}
                        right={<>
                            <Fields rows={[{ label: 'Seed:', value: '0' }]} />
                            <Fields rows={[{ label: 'Virtual Parents:', value: '0.000', fill: 6 }]} />
                            <Check label="Long Hair" />
                        </>}
                    />
                    <Cols
                        gap="gap-[3px]"
                        left={<>
                            <Caption>Effects:</Caption>
                            <div>
                                <Check label="Use Clump Curve" />
                                <Fields rows={[{ label: 'Clump:', value: '0.000', fill: 52 }, { label: 'Shape:', value: '0.000', fill: 52 }]} />
                            </div>
                            <div>
                                <Check label="Use Clump Noise" />
                                <Fields rows={[{ label: 'Clump Noise Size:', value: '0.100', off: true }]} />
                            </div>
                            <Fields rows={[{ label: 'Length:', value: '0.283', fill: 31 }, { label: 'Threshold:', value: '0.000', fill: 6 }]} />
                            <Fields rows={[{ label: 'Parting:', value: '0.000', fill: 6 }, { label: 'Min:', value: '0.000' }, { label: 'Max:', value: '0.000' }]} />
                        </>}
                        right={<>
                            <Check label="Use Roughness Curve" />
                            <Caption>Roughness:</Caption>
                            <Fields rows={[{ label: 'Uniform:', value: '0.000' }, { label: 'Size:', value: '1.000' }]} />
                            <Fields rows={[{ label: 'Endpoint:', value: '0.006' }, { label: 'Shape:', value: '1.000' }]} />
                            <Fields rows={[{ label: 'Random:', value: '0.006' }, { label: 'Size:', value: '0.685' }, { label: 'Threshold:', value: '0.000', fill: 6 }]} />
                        </>}
                    />
                    <Caption>Kink:</Caption>
                    <Tabs items={['Nothing', 'Curl', 'Radial', 'Wave', 'Braid', 'Spiral']} active="Braid" />
                    <Cols
                        gap="gap-[3px]"
                        left={<>
                            <Fields rows={[{ label: 'Amplitude:', value: '0.202' }, { label: 'Clump:', value: '1.000', fill: 100 }]} />
                            <Fields rows={[{ label: 'Flatness:', value: '0.000', fill: 6 }]} />
                        </>}
                        right={<Fields rows={[{ label: 'Frequency:', value: '0.343' }, { label: 'Shape:', value: '0.000', fill: 52 }]} />}
                    />
                </Panel>
                <Panel title="Field Weights">
                    <label className="flex items-center justify-between pl-3">
                        Group:
                        <span className={`flex h-5 w-[226px] items-center rounded-[5px] border border-[#2c2c2c] pl-1.5 ${light}`}>
                            <I><path d="M8 1.500 14 4 8 6.500 2 4zM2 4l6 2.500v8L2 12zM14 4 8 6.500v8l6-2.500z" fill="#f2f2f2" stroke="#222" strokeWidth="0.800" /></I>
                            <input className="w-0 flex-1 bg-transparent outline-none" />
                        </span>
                    </label>
                </Panel>
            </div>
            <div className="mt-1 mr-1 mb-1 ml-[5px] w-[13px] rounded-full bg-[#555] pt-[270px]">
                <div className="h-[240px] rounded-full bg-linear-to-r from-[#8e8e8e] to-[#747474]" />
            </div>
            <Grip at="bl" />
        </div>
    </>
)

/* ---------- desktop taskbar ---------- */

const T = ({ children }: { children: ReactNode }) => (
    <svg className="h-8 w-8" viewBox="0 0 32 32" aria-hidden="true">{children}</svg>
)

const Office = ({ letter, color }: { letter: string; color: string }) => (
    <T>
        {letter === 'O' ? (
            <><path d="M16 9h14v14H16z" fill="#fff" /><path d="M17 12l6 6 7-9" stroke={color} strokeWidth="2" fill="none" /></>
        ) : letter === 'P' ? (
            <><path d="M16 6h14v21H16z" fill="#fff" /><circle cx="22" cy="13" r="4.500" fill={color} /><path d="M22 13V8.500a4.500 4.500 0 0 1 4.500 4.500z" fill="#fff" /><path d="M18 21h9M18 24h9" stroke={color} strokeWidth="1.500" /></>
        ) : letter === 'X' ? (
            <><path d="M18 6h12v21H18z" fill="#fff" /><path d="M19 9h10M19 12h10M19 15h10M19 18h10M19 21h10M19 24h10M24 7v19" stroke={color} strokeWidth="1.200" /></>
        ) : (
            <><path d="M16 6h13v21H16z" fill="#fff" /><path d="M18 9h9M18 12h9M18 15h9M18 18h9M18 21h9M18 24h9" stroke={color} strokeWidth="1.300" />{letter === 'N' && <path d="M30 8v18" stroke={color} strokeWidth="1.500" />}</>
        )}
        <path d="M1 5 18 2v29L1 28z" fill={color} />
        <text x="9.500" y="22" textAnchor="middle" fontSize="15" fontWeight="700" fill="#fff">{letter}</text>
    </T>
)

const Chrome = ({ a, b, c, d }: { a: string; b: string; c: string; d: string }) => (
    <T>
        <circle cx="16" cy="16" r="14.500" fill={b} />
        <path d="M3.400 8.700A14.500 14.500 0 0 1 28.600 8.700H16a7.300 7.300 0 0 0-6.500 4z" fill={a} />
        <path d="M3.400 8.700 9.700 19.700a7.300 7.300 0 0 0 7.800 3.500L13.500 30.300A14.500 14.500 0 0 1 3.400 8.700z" fill={b} />
        <path d="M28.600 8.700A14.500 14.500 0 0 1 13.700 30.300L22.300 19.600a7.300 7.300 0 0 0-1.800-9.400l-1-1.500z" fill={c} />
        <circle cx="16" cy="16" r="7" fill="#f2f2f2" /><circle cx="16" cy="16" r="5.600" fill={d} />
    </T>
)

const apps: { name: string; open?: boolean; front?: boolean; icon: ReactNode }[] = [
    {
        name: 'Store',
        icon: (
            <T>
                <path d="M1 1h30v30H1z" fill="#11880f" /><path d="M5 11 27 8v18L6 24z" fill="#fff" />
                <path d="M11 12V8q0-4 4-4 5 0 5 5" stroke="#fff" strokeWidth="1.600" fill="none" />
                <path d="M11 14l4-.5v4h-4zM16 13.300l5-.6v4.800h-5zM11 18.500h4v4l-4-.4zM16 18.500h5v4.600l-5-.5z" fill="#11880f" />
            </T>
        ),
    },
    {
        name: 'File Explorer', open: true,
        icon: (
            <T>
                <path d="M2 5h8l2-2h8l1 2h8v18H2z" fill="#e6c35d" /><path d="M3 7h26v4H3z" fill="#fff" /><path d="M6 6h4M15 6h4" stroke="#4c9a4c" strokeWidth="2" />
                <path d="M1 9h30v16H1z" fill="#f9e39a" /><path d="M1 9h30v7H1z" fill="#fdf0c0" />
                <path d="M5 31V23q0-3 3-3h16q3 0 3 3v8h-5v-5H10v5z" fill="#a6d8f4" stroke="#5da5cf" />
            </T>
        ),
    },
    {
        name: 'Firefox',
        icon: (
            <T>
                <circle cx="16" cy="17" r="14" fill="#e8471d" /><circle cx="16" cy="12.500" r="10" fill="#1f5fb4" /><path d="M9 6q6-5 13 0-3 5-9 4z" fill="#3aa0e0" />
                <path d="M20 1q11 4 11 15 0 12-12 15 7-4 6-13-.5-6-4-9 1-4-1-8z" fill="#ffcb2e" />
                <path d="M4 4q0 4 4 5 3-1 5 1-1 3-4 3.500-1 4 3 5 4 1 7-2 0 6-7 7Q2 25 2 14q0-6 2-10z" fill="#f58220" />
            </T>
        ),
    },
    {
        name: 'Steam',
        icon: (
            <T>
                <circle cx="16" cy="16" r="14.500" fill="#12294d" /><path d="M2 19q4 10 13 11.500 10 1 14-9z" fill="#1e6fae" opacity="0.600" />
                <circle cx="21" cy="12" r="5" fill="none" stroke="#e4ebf2" strokeWidth="2" /><circle cx="21" cy="12" r="2.800" fill="#a8b8c8" />
                <path d="M2 16l9 4 6-6 5 4-7 4.500q-1 3.500-4 3.500t-4-3.500L2 20z" fill="#f4f7fa" />
            </T>
        ),
    },
    {
        name: 'Half-Life 2',
        icon: (
            <T>
                <path d="M4 5q12-6 26-2l-2 10q0 16-13 18Q2 29 2 16z" fill="#4a4038" />
                <circle cx="14" cy="16" r="11" fill="#f49b20" /><path d="M10 9h3l6 13h2M14 13 9 23" stroke="#2d2418" strokeWidth="2.600" fill="none" />
                <text x="27" y="10" textAnchor="middle" fontSize="9" fontWeight="700" fill="#f5c069">2</text>
            </T>
        ),
    },
    {
        name: 'Internet Explorer',
        icon: (
            <T>
                <path d="M27.500 21.500A10 10 0 1 1 27.500 17H13" stroke="#3fb5ea" strokeWidth="5" fill="none" /><path d="M9 13q3-6 9-5.500" stroke="#a5e4fb" strokeWidth="2" fill="none" />
                <path d="M3 30Q-2 22 9 11 21 0 28 2q4 2 0 8 1-5-2-5Q19 5 10 14 2 24 6 28z" fill="#f4cf3b" />
            </T>
        ),
    },
    { name: 'Chrome', open: true, icon: <Chrome a="#d8483a" b="#2f9e4f" c="#fad046" d="#4a83e8" /> },
    { name: 'Chromium', icon: <Chrome a="#6ea2ea" b="#3f74c6" c="#a9c8f5" d="#4a7fd4" /> },
    { name: 'Excel', icon: <Office letter="X" color="#1f7244" /> },
    { name: 'OneNote', icon: <Office letter="N" color="#80397b" /> },
    { name: 'Outlook', icon: <Office letter="O" color="#0f6fc6" /> },
    { name: 'PowerPoint', icon: <Office letter="P" color="#d24625" /> },
    { name: 'Word', icon: <Office letter="W" color="#2a5699" /> },
    { name: 'Blender', open: true, front: true, icon: <BlenderLogo className="h-7 w-8" /> },
]

// petals of the wallpaper that shine through the bar
const blobs = [
    'radial-gradient(ellipse 24px 30px at 48px 6px,#4f6f8099 30%,transparent)',
    'radial-gradient(ellipse 30px 14px at 215px 8px,#7a90a066 30%,transparent)',
    'radial-gradient(ellipse 18px 12px at 248px 22px,#7a90a066 30%,transparent)',
    'radial-gradient(ellipse 70px 14px at 590px 4px,#1f5f6499 40%,transparent)',
    'radial-gradient(ellipse 22px 14px at 690px 6px,#8280b899 30%,transparent)',
    'radial-gradient(ellipse 60px 22px at 730px 6px,#28686e66 30%,transparent)',
    'radial-gradient(ellipse 18px 11px at 945px 30px,#8aa6ac77 30%,transparent)',
    'radial-gradient(ellipse 24px 12px at 1000px 18px,#8aa6ac77 30%,transparent)',
    'radial-gradient(ellipse 14px 22px at 1065px 12px,#7aa0a888 30%,transparent)',
    'radial-gradient(ellipse 12px 20px at 1096px 10px,#7a8fb077 30%,transparent)',
    'radial-gradient(ellipse 18px 18px at 1343px 11px,#8aa4b4aa 35%,transparent)',
    'radial-gradient(ellipse 14px 22px at 1517px 34px,#7f9aaf88 30%,transparent)',
    'radial-gradient(ellipse 14px 24px at 1589px 20px,#7f86b8aa 35%,transparent)',
    'radial-gradient(ellipse 18px 14px at 1662px 12px,#7f9aafaa 35%,transparent)',
    'radial-gradient(ellipse 20px 12px at 1735px 22px,#7f9aaf66 30%,transparent)',
    'linear-gradient(90deg,#3f8a84,#35887f 30%,#42978c 45%,#348478 60%,#45918b 78%,#338577)',
].join(',')

const Taskbar = () => (
    <footer className="flex h-10 shrink-0 items-stretch border-t border-[#2f7a73] font-['Open_Sans','Noto_Sans',sans-serif] text-white" style={{ background: blobs }}>
        <button aria-label="Start" className="flex w-[50px] items-center justify-center">
            <svg className="size-[27px]" viewBox="0 0 27 27"><path d="M0 4 11.500 2.300V13H0zM12.800 2.100 27 0v13H12.800zM0 14.200h11.500V25L0 23.300zM12.800 14.200H27V27.200l-14.200-2z" fill="#fff" /></svg>
        </button>
        {apps.map((a) => (
            <button
                key={a.name}
                aria-label={a.name}
                className={`mx-0.5 flex w-[58px] items-center justify-center border ${a.front ? 'border-white/80 bg-white/45' : a.open ? 'border-white/40 bg-white/25' : 'border-transparent'}`}
            >
                {a.icon}
            </button>
        ))}
        <div className="mr-[13px] ml-auto flex items-center gap-1.5">
            <svg className="mr-1.5 h-2 w-3" viewBox="0 0 12 8"><path d="M6 1l4.500 5h-9z" fill="#fff" /></svg>
            <svg className="size-[18px]" viewBox="0 0 18 18"><path d="M4 6h3l5-4v14l-5-4H4z" fill="#fff" stroke="#1b3b3a" strokeWidth="0.700" /></svg>
            <svg className="size-[18px]" viewBox="0 0 18 18" fill="none"><path d="M6 5h10v8H6zM9 15.500h6" stroke="#fff" strokeWidth="1.600" /><path d="M1 3h4v4H1zM3 7v8h5" stroke="#fff" strokeWidth="1.300" /></svg>
            <svg className="size-[18px]" viewBox="0 0 18 18"><path d="M3 2v15" stroke="#fff" strokeWidth="1.600" /><path d="M4 3h4l1 1h6v7H9L8 9H4z" fill="#fff" /><circle cx="13" cy="13" r="4.500" fill="#cf3b2b" /><path d="M11 11l4 4M15 11l-4 4" stroke="#fff" strokeWidth="1.400" /></svg>
            <p className="ml-2.5 text-center text-[11px] leading-4">7:22 PM<br />10/18/2018</p>
        </div>
    </footer>
)

/* ---------- window ---------- */

const stats = 'v2.79 | Verts:899,951 | Faces:906,408 | Tris:1,812,816 | Objects:1/15 | Lamps:0/3 | Mem:325.21M | Plane.001'

const App = () => (
    <div className="flex h-screen flex-col overflow-hidden bg-[#65b9b4] font-['DejaVu_Sans_Condensed','DejaVu_Sans',sans-serif] text-[11px] leading-4">
        <div className="relative flex h-8 shrink-0 items-start justify-center border-t-2 border-[#4c9690] bg-[#60bab3] pt-1">
            <span className="absolute top-2 left-2.5"><BlenderLogo className="h-3.5 w-4" /></span>
            <h1 className="font-['Noto_Sans','Open_Sans',sans-serif] text-[14px] leading-5 text-[#1d4542]">Blender* [A:\blender files\abstract lighting.blend]</h1>
            <div className="absolute top-0 right-[7px] flex h-[19px] items-center">
                <button aria-label="Minimize" className="flex h-full w-[27px] items-center justify-center"><span className="mt-1 h-0.5 w-2 bg-[#173b38]" /></button>
                <button aria-label="Maximize" className="flex h-full w-[27px] items-center justify-center"><span className="h-2 w-2.5 border border-t-2 border-[#173b38]" /></button>
                <button aria-label="Close" className="flex h-full w-[45px] items-center justify-center bg-[#c75050]">
                    <svg className="size-2" viewBox="0 0 8 8"><path d="M.5.5l7 7M7.500.5l-7 7" stroke="#fff" strokeWidth="1.600" /></svg>
                </button>
            </div>
        </div>

        <main className="mx-2 mb-2 flex min-h-0 flex-1 flex-col">
            <Header className="border-b border-black bg-[#696969] pl-2">
                <EditorType label="Editor type"><InfoIcon /></EditorType>
                <Menus items={['File', 'Render', 'Window', 'Help']} />
                <Cluster>
                    <IconBtn label="Browse layouts" tone={dark} wide><ScreenIcon /><UpDown /></IconBtn>
                    <input aria-label="Screen layout" className={`w-[118px] pt-0.5 pl-2 text-black outline-none ${light}`} defaultValue="Default" />
                    <IconBtn label="Add layout"><PlusIcon /></IconBtn>
                    <IconBtn label="Delete layout"><CrossIcon /></IconBtn>
                </Cluster>
                <Cluster className="ml-[5px]">
                    <IconBtn label="Browse scenes" tone={dark} wide><SceneIcon /><UpDown /></IconBtn>
                    <input aria-label="Scene" className={`w-[118px] pt-0.5 pl-2 text-black outline-none ${light}`} defaultValue="Scene" />
                    <IconBtn label="Add scene"><PlusIcon /></IconBtn>
                    <IconBtn label="Delete scene"><CrossIcon /></IconBtn>
                </Cluster>
                <Drop label="Render engine" value="Cycles Render" className="ml-4 h-5 w-[126px] rounded-[5px] border border-[#242424]" />
                <div className="ml-[18px] flex h-5 items-center gap-2 text-black">
                    <BlenderLogo className="h-4 w-[18px]" />
                    <p className="pt-0.5">
                        {stats.split(/([\d.,]+)/).map((s, i) => <span key={i} className={i % 2 ? valueFont : ''}>{s}</span>)}
                    </p>
                </div>
                <Grip at="tr" />
                <Grip at="bl" />
            </Header>

            <div className="flex min-h-0 flex-1">
                <div className="flex min-w-0 flex-1 flex-col">
                    <NodeEditor />
                    <NodeHeader />
                    <Timeline />
                    <TimelineHeader />
                </div>
                <aside className="flex w-[380px] shrink-0 flex-col border-l border-black">
                    <Outliner />
                    <Properties />
                </aside>
            </div>
        </main>

        <Taskbar />
    </div>
)

export default App
